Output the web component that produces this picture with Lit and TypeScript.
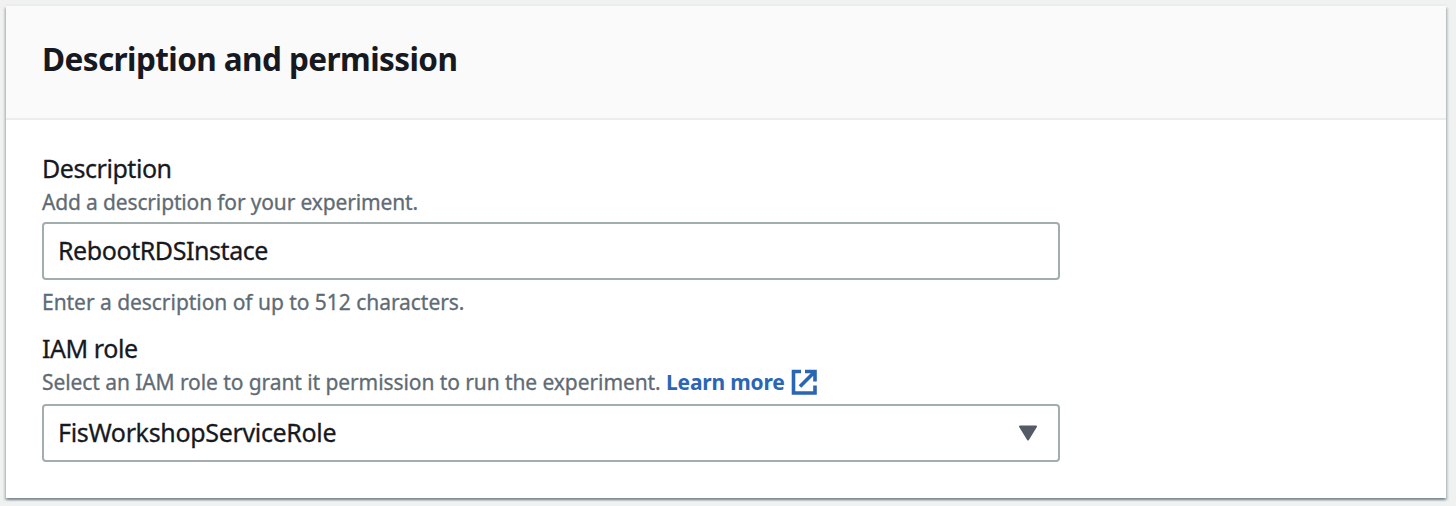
import { LitElement, html, css } from "lit";
import { customElement, property } from "lit/decorators.js";

@customElement("form-field")
class FormField extends LitElement {
  @property() label = "";
  @property() constraint = "";

  static styles = css`
    :host { display: block; width: 1018px; -webkit-text-stroke: 0.3px currentColor; }
    .label { font-size: 25px; line-height: 36px; height: 36px; color: #16191f; letter-spacing: -0.45px; }
    .hint { font-size: 21px; line-height: 32px; height: 32px; color: #5f6b74; letter-spacing: -0.08px; white-space: nowrap; }
    .constraint { margin-top: 6px; letter-spacing: -0.04px; }
  `;

  render() {
    return html`
      <div class="label">${this.label}</div>
      <div class="hint"><slot name="hint"></slot></div>
      <slot></slot>
      ${this.constraint ? html`<div class="hint constraint">${this.constraint}</div>` : ""}
    `;
  }
}

@customElement("app-root")
class AppRoot extends LitElement {
  static styles = css`
    :host {
      display: block; box-sizing: border-box; width: 1456px; height: 506px;
      padding: 6px 10px 8px 6px; background: #f0f2f2; overflow: hidden;
      font-family: "Noto Sans", "Open Sans", sans-serif; color: #16191f;
    }
    .card {
      box-sizing: border-box; height: 492px; background: #fff;
      box-shadow: 0 2px 2px 0 rgba(0, 28, 36, 0.3), 2px 2px 2px 0 rgba(0, 28, 36, 0.15), -2px 2px 2px 0 rgba(0, 28, 36, 0.15), 0 -2px 0 0 #eaeded;
    }
    .header {
      box-sizing: border-box; height: 114px; padding: 31px 36px 0;
      background: #fafafa; border-bottom: 2px solid #eaeded;
    }
    h2 { margin: 0; font-size: 31.5px; line-height: 44px; font-weight: 700; letter-spacing: -0.58px; white-space: nowrap; }
    .body { padding: 30px 36px 0; display: flex; flex-direction: column; gap: 12px; }
    .control {
      box-sizing: border-box; height: 58px; margin-top: 4px; padding: 0 20px 0 14px;
      border: 2px solid #a2adad; border-radius: 4px; background: #fff;
      display: flex; align-items: center; justify-content: space-between;
      font-size: 25px; line-height: 36px; letter-spacing: -0.43px;
    }
    .select { margin-top: 6px; letter-spacing: -0.33px; }
    .value { padding-bottom: 2px; }
    .short { letter-spacing: -0.15px; }
    .link { color: #2a66b4; font-weight: 700; text-decoration: none; letter-spacing: -0.2px; -webkit-text-stroke: 0; }
    .external { width: 28px; height: 28px; vertical-align: -6px; }
    .arrow { width: 20px; height: 16px; }
  `;

  render() {
    return html`
      <section class="card">
        <div class="header"><h2>Description and permission</h2></div>
        <div class="body">
          <form-field label="Description" constraint="Enter a description of up to 512 characters.">
            <span slot="hint" class="short">Add a description for your experiment.</span>
            <div class="control"><span class="value">RebootRDSInstace</span></div>
          </form-field>
          <form-field label="IAM role">
            <span slot="hint">Select an IAM role to grant it permission to run the experiment. <a class="link">Learn more <svg class="external" viewBox="0 0 28 28" fill="none" stroke="#2a66b4" stroke-width="3.6"><path d="M11 3.5H3.5V25H25V17.5M15 3.5H25V13.5M24.5 4L10 18.5"/></svg></a></span>
            <div class="control select">
              <span class="value">FisWorkshopServiceRole</span>
              <svg class="arrow" viewBox="0 0 20 16"><path d="M2 1.5H18L10 14.5Z" fill="#545b64" stroke="#545b64" stroke-width="2" stroke-linejoin="round"/></svg>
            </div>
          </form-field>
        </div>
      </section>
    `;
  }
}
